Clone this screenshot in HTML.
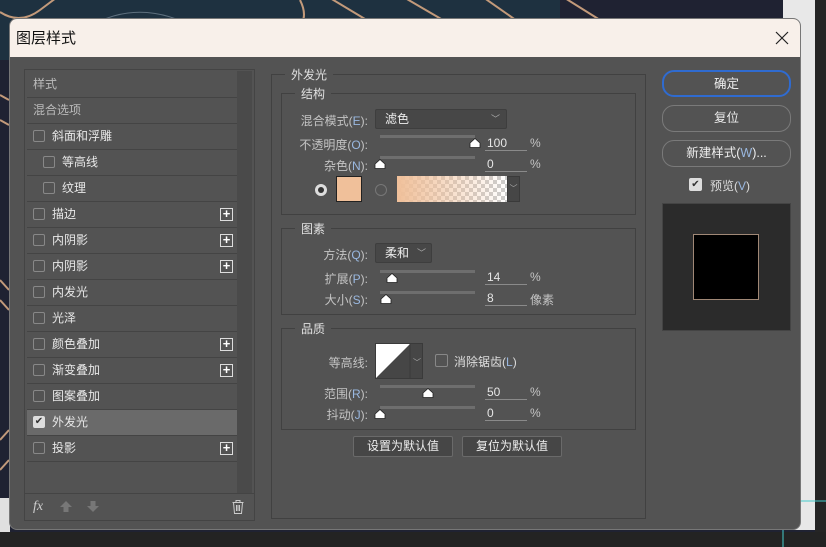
<!DOCTYPE html>
<html><head><meta charset="utf-8"><style>
*{box-sizing:border-box;margin:0;padding:0}
body{width:826px;height:547px;overflow:hidden;position:relative;background:#1c1a26;font-family:"Liberation Sans","Noto Sans CJK SC",sans-serif;font-size:12px}
.a{position:absolute}
.dlg{left:9px;top:18px;width:792px;height:512px;background:#535353;border-radius:8px;overflow:hidden;border:1px solid #777}
.tb{left:0;top:0;width:792px;height:38px;background:#f8f0ea}
.t{color:#ddd;white-space:nowrap}
.lbl{color:#c4c4c4;white-space:nowrap;text-align:right}
.row{left:17px;width:210px;height:26px;border-bottom:1px solid #444;color:#e8e8e8;line-height:25px}
.cb{width:12px;height:12px;border:1px solid #888;border-radius:2px;display:inline-block}
.plus{width:13px;height:13px;border:1px solid #ddd;color:#fff;font-size:13px;line-height:10px;text-align:center;font-weight:bold}
.grp{border:1px solid #414141}
.lg{background:#535353;padding:0 6px;color:#e0e0e0}
.sl{height:3px;background:#6e6e6e}
.inp{width:42px;height:15px;border-bottom:1px solid #8a8a8a;color:#e6e6e6;line-height:14px;padding-left:2px}
.btn{border:1px solid #7a7a7a;border-radius:12px;color:#eee;text-align:center;line-height:24px;font-size:12.5px}
.sb{border:1px solid #3e3e3e;background:#464646;color:#eee;text-align:center;line-height:18px;border-radius:2px}
.u{color:#9ab8e0}
.th{width:12px;height:10px}
</style></head><body>
<svg width="0" height="0" style="position:absolute"><defs><symbol id="th" viewBox="0 0 12 10"><path d="M1 9.5 L1 5 L6 0.5 L11 5 L11 9.5 Z" fill="#fff" stroke="#222" stroke-width="0.8"/></symbol></defs></svg>
<svg class="a" style="left:0;top:0" width="826" height="547">
<rect x="0" y="0" width="826" height="547" fill="#1f2232"/>
<rect x="0" y="0" width="560" height="60" fill="#1e3140"/>
<g fill="none" stroke="#c39a7a" stroke-width="2">
<path d="M0 12 Q20 25 40 10 L60 -5"/><path d="M300 0 Q310 20 295 30"/><path d="M325 -5 L375 25"/><path d="M400 -5 L460 30"/><path d="M480 -5 L530 30"/><path d="M560 -5 L600 20"/><path d="M0 95 L9 100"/><path d="M0 120 L9 125"/><path d="M0 280 L9 290"/><path d="M0 300 L9 310"/><path d="M0 440 L9 430"/><path d="M0 470 L9 460"/>
</g>
<g fill="none" stroke="#8a9aa8" stroke-width="1" opacity="0.6"><path d="M70 40 Q130 -10 200 30"/><path d="M90 45 Q140 5 190 35"/></g>
<rect x="783" y="0" width="32" height="530" fill="#e8e8e8"/>
<rect x="815" y="0" width="11" height="547" fill="#252525"/>
<rect x="0" y="498" width="10" height="34" fill="#e0e0e0"/>
<rect x="0" y="532" width="826" height="15" fill="#232323"/>
<line x1="801" y1="501" x2="826" y2="501" stroke="#4cc" stroke-width="1"/>
<line x1="783" y1="530" x2="783" y2="547" stroke="#4cc" stroke-width="1"/>
</svg>
<div class="a dlg">
<div class="a tb"></div>
<div class="a" style="left:6px;top:8px;font-size:15px;color:#111">图层样式</div>
<svg class="a" style="left:765px;top:12px" width="14" height="14"><path d="M1 1 L13 13 M13 1 L1 13" stroke="#222" stroke-width="1.2"/></svg>

<div class="a grp" style="left:14px;top:50px;width:231px;height:452px;border-color:#444"></div>
<div class="a" style="left:227px;top:52px;width:15px;height:422px;background:#4a4a4a"></div>
<div class="a" style="left:15px;top:474px;width:229px;height:1px;background:#444"></div>
<div class="a row" style="top:53px;color:#bbb;padding-left:6px">样式</div>
<div class="a row" style="top:79px;color:#bbb;padding-left:6px">混合选项</div>
<div class="a row" style="top:105px"><span class="a cb" style="left:6px;top:6px"></span><span class="a" style="left:25px">斜面和浮雕</span></div>
<div class="a row" style="top:131px"><span class="a cb" style="left:16px;top:6px"></span><span class="a" style="left:35px">等高线</span></div>
<div class="a row" style="top:157px"><span class="a cb" style="left:16px;top:6px"></span><span class="a" style="left:35px">纹理</span></div>
<div class="a row" style="top:183px"><span class="a cb" style="left:6px;top:6px"></span><span class="a" style="left:25px">描边</span><span class="a plus" style="left:193px;top:6px">+</span></div>
<div class="a row" style="top:209px"><span class="a cb" style="left:6px;top:6px"></span><span class="a" style="left:25px">内阴影</span><span class="a plus" style="left:193px;top:6px">+</span></div>
<div class="a row" style="top:235px"><span class="a cb" style="left:6px;top:6px"></span><span class="a" style="left:25px">内阴影</span><span class="a plus" style="left:193px;top:6px">+</span></div>
<div class="a row" style="top:261px"><span class="a cb" style="left:6px;top:6px"></span><span class="a" style="left:25px">内发光</span></div>
<div class="a row" style="top:287px"><span class="a cb" style="left:6px;top:6px"></span><span class="a" style="left:25px">光泽</span></div>
<div class="a row" style="top:313px"><span class="a cb" style="left:6px;top:6px"></span><span class="a" style="left:25px">颜色叠加</span><span class="a plus" style="left:193px;top:6px">+</span></div>
<div class="a row" style="top:339px"><span class="a cb" style="left:6px;top:6px"></span><span class="a" style="left:25px">渐变叠加</span><span class="a plus" style="left:193px;top:6px">+</span></div>
<div class="a row" style="top:365px"><span class="a cb" style="left:6px;top:6px"></span><span class="a" style="left:25px">图案叠加</span></div>
<div class="a row" style="top:391px;background:#6a6a6a"><span class="a cb" style="left:6px;top:6px;background:#ddd;border-color:#ddd;color:#333;font-size:10px;line-height:10px;text-align:center">✔</span><span class="a" style="left:25px">外发光</span></div>
<div class="a row" style="top:417px"><span class="a cb" style="left:6px;top:6px"></span><span class="a" style="left:25px">投影</span><span class="a plus" style="left:193px;top:6px">+</span></div>
<div class="a" style="left:23px;top:480px;color:#ccc;font-style:italic;font-size:14px;font-family:'Liberation Serif',serif">fx</div>
<svg class="a" style="left:50px;top:482px" width="40" height="12"><path d="M6 0 L12 6 L8.5 6 L8.5 11 L3.5 11 L3.5 6 L0 6 Z" fill="#777"/><path d="M33 11 L39 5 L35.5 5 L35.5 0 L30.5 0 L30.5 5 L27 5 Z" fill="#777"/></svg>
<svg class="a" style="left:222px;top:481px" width="12" height="14"><path d="M0.5 2.5 H11.5 M4 2.5 V0.5 H8 V2.5 M1.5 2.5 L2.5 13.5 H9.5 L10.5 2.5 M4.5 5 V11 M6 5 V11 M7.5 5 V11" stroke="#ccc" fill="none" stroke-width="1"/></svg>

<div class="a grp" style="left:261px;top:55px;width:375px;height:445px"></div>
<div class="a lg" style="left:275px;top:47px">外发光</div>
<div class="a grp" style="left:271px;top:74px;width:355px;height:122px"></div>
<div class="a lg" style="left:285px;top:66px">结构</div>
<div class="a lbl" style="left:270px;top:93px;width:88px">混合模式(<span class="u">E</span>):</div>
<div class="a sb" style="left:365px;top:90px;width:132px;text-align:left;padding-left:9px;background:#474747">滤色<span class="a" style="right:6px;top:0;color:#aaa;font-size:9px">﹀</span></div>
<div class="a lbl" style="left:270px;top:117px;width:88px">不透明度(<span class="u">O</span>):</div>
<div class="a sl" style="left:370px;top:116px;width:95px"></div>
<svg class="a th" style="left:459px;top:119px"><use href="#th"/></svg>
<div class="a inp" style="left:475px;top:117px">100</div><div class="a lbl" style="left:520px;top:117px">%</div>
<div class="a lbl" style="left:270px;top:138px;width:88px">杂色(<span class="u">N</span>):</div>
<div class="a sl" style="left:370px;top:137px;width:95px"></div>
<svg class="a th" style="left:364px;top:140px"><use href="#th"/></svg>
<div class="a inp" style="left:475px;top:138px">0</div><div class="a lbl" style="left:520px;top:138px">%</div>
<div class="a" style="left:305px;top:165px;width:12px;height:12px;border-radius:50%;background:#ddd;border:3px solid #ddd"><div style="width:6px;height:6px;background:#333;border-radius:50%"></div></div>
<div class="a" style="left:326px;top:157px;width:26px;height:26px;background:#f0c09a;border:1px solid #222"></div>
<div class="a" style="left:365px;top:165px;width:12px;height:12px;border-radius:50%;border:1px solid #777"></div>
<div class="a" style="left:387px;top:157px;width:110px;height:26px;background:linear-gradient(90deg,#f0c09a,rgba(240,192,154,0)),repeating-conic-gradient(#ccc 0 25%,#fff 0 50%) 0 0/8px 8px"></div>
<div class="a" style="left:497px;top:157px;width:13px;height:26px;background:#464646;border:1px solid #3a3a3a;color:#aaa;font-size:8px;line-height:24px;text-align:center">﹀</div>

<div class="a grp" style="left:271px;top:209px;width:355px;height:87px"></div>
<div class="a lg" style="left:285px;top:201px">图素</div>
<div class="a lbl" style="left:270px;top:227px;width:88px">方法(<span class="u">Q</span>):</div>
<div class="a sb" style="left:365px;top:224px;width:57px;text-align:left;padding-left:9px;background:#474747">柔和<span class="a" style="right:5px;top:0;color:#aaa;font-size:9px">﹀</span></div>
<div class="a lbl" style="left:270px;top:251px;width:88px">扩展(<span class="u">P</span>):</div>
<div class="a sl" style="left:370px;top:251px;width:95px"></div>
<svg class="a th" style="left:376px;top:254px"><use href="#th"/></svg>
<div class="a inp" style="left:475px;top:251px">14</div><div class="a lbl" style="left:520px;top:251px">%</div>
<div class="a lbl" style="left:270px;top:272px;width:88px">大小(<span class="u">S</span>):</div>
<div class="a sl" style="left:370px;top:272px;width:95px"></div>
<svg class="a th" style="left:370px;top:275px"><use href="#th"/></svg>
<div class="a inp" style="left:475px;top:272px">8</div><div class="a lbl" style="left:520px;top:272px">像素</div>

<div class="a grp" style="left:271px;top:309px;width:355px;height:102px"></div>
<div class="a lg" style="left:285px;top:301px">品质</div>
<div class="a lbl" style="left:270px;top:335px;width:88px">等高线:</div>
<svg class="a" style="left:365px;top:324px" width="48" height="36"><rect x="0.5" y="0.5" width="47" height="35" fill="#464646" stroke="#3a3a3a"/><polygon points="1,35 35,1 1,1" fill="#fff"/><line x1="35" y1="1" x2="35" y2="35" stroke="#3a3a3a"/><text x="38" y="22" fill="#aaa" font-size="8">﹀</text></svg>
<div class="a cb" style="left:425px;top:335px;width:13px;height:13px"></div>
<div class="a t" style="left:444px;top:334px">消除锯齿(<span class="u">L</span>)</div>
<div class="a lbl" style="left:270px;top:366px;width:88px">范围(<span class="u">R</span>):</div>
<div class="a sl" style="left:370px;top:366px;width:95px"></div>
<svg class="a th" style="left:412px;top:369px"><use href="#th"/></svg>
<div class="a inp" style="left:475px;top:366px">50</div><div class="a lbl" style="left:520px;top:366px">%</div>
<div class="a lbl" style="left:270px;top:387px;width:88px">抖动(<span class="u">J</span>):</div>
<div class="a sl" style="left:370px;top:387px;width:95px"></div>
<svg class="a th" style="left:364px;top:390px"><use href="#th"/></svg>
<div class="a inp" style="left:475px;top:387px">0</div><div class="a lbl" style="left:520px;top:387px">%</div>
<div class="a sb" style="left:343px;top:417px;width:100px;height:21px;border-color:#6a6a6a">设置为默认值</div>
<div class="a sb" style="left:452px;top:417px;width:100px;height:21px;border-color:#6a6a6a">复位为默认值</div>

<div class="a btn" style="left:652px;top:51px;width:129px;height:27px;border:2px solid #2f6bd0">确定</div>
<div class="a btn" style="left:652px;top:86px;width:129px;height:27px">复位</div>
<div class="a btn" style="left:652px;top:121px;width:129px;height:27px">新建样式(<span class="u">W</span>)...</div>
<div class="a cb" style="left:679px;top:159px;width:13px;height:13px;background:#ddd;border-color:#ddd;color:#333;font-size:10px;line-height:11px;text-align:center">✔</div>
<div class="a t" style="left:700px;top:158px">预览(<span class="u">V</span>)</div>
<div class="a" style="left:652px;top:184px;width:129px;height:128px;background:#2b2b2b;border:1px solid #444"></div>
<div class="a" style="left:683px;top:215px;width:66px;height:66px;background:#000;border:1px solid #a08876"></div>
</div>
</body></html>
